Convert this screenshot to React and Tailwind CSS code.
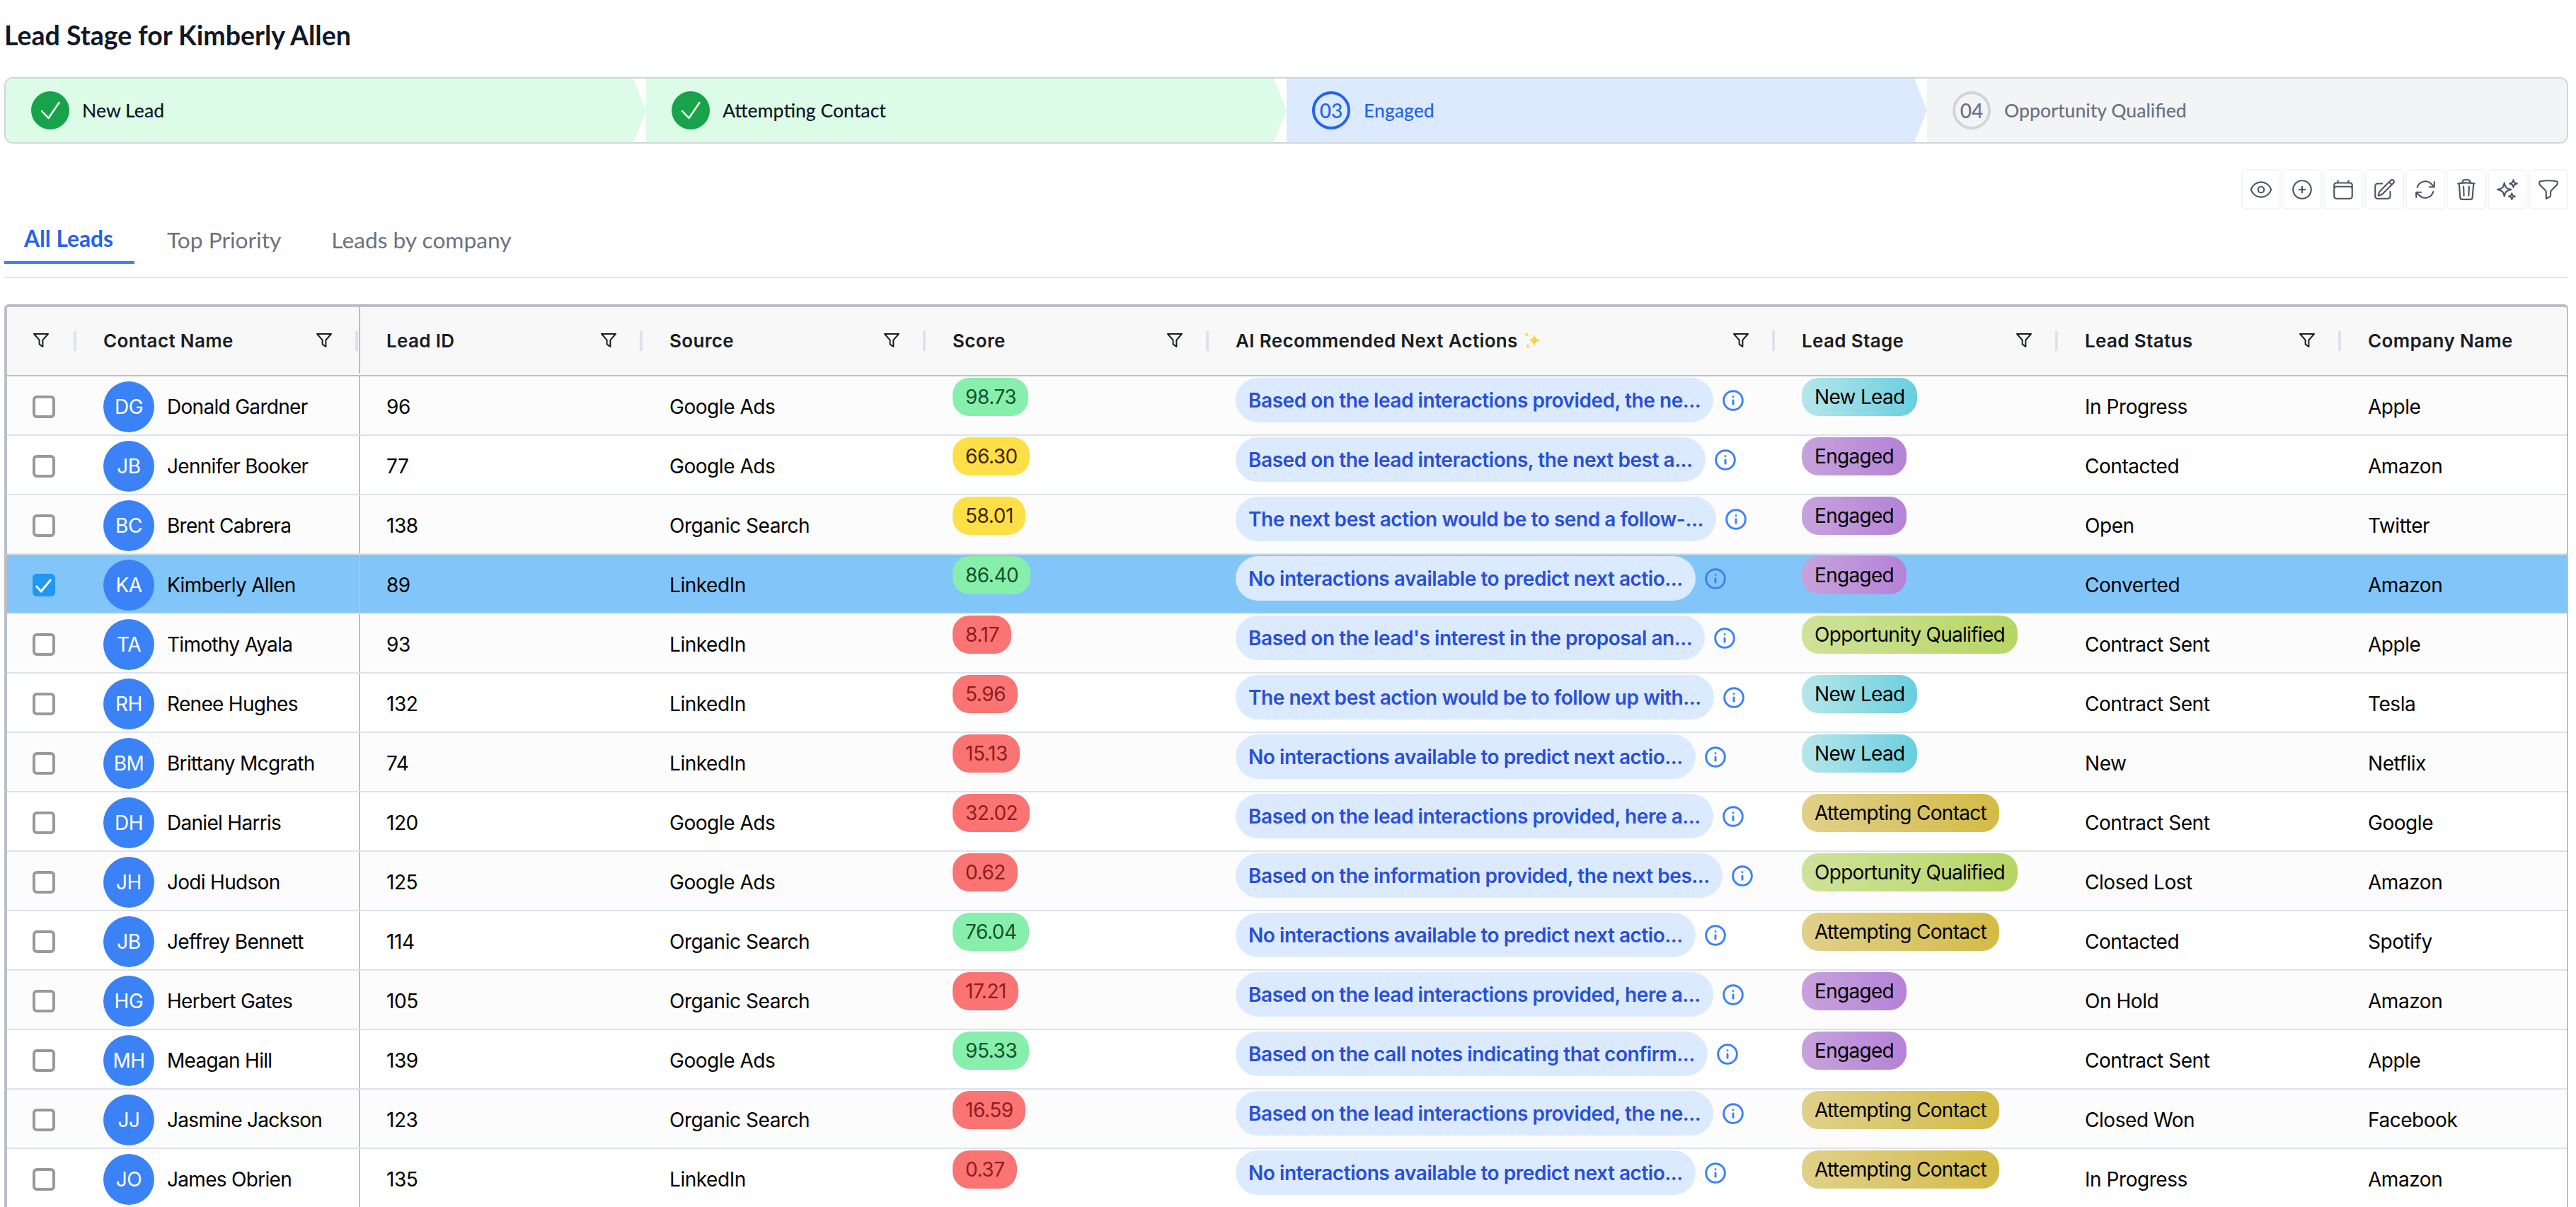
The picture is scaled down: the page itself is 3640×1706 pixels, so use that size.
import { Info } from 'lucide-react';
import {
  HiOutlineEye,
  HiOutlinePlusCircle,
  HiOutlineCalendar,
  HiOutlinePencilSquare,
  HiOutlineArrowPath,
  HiOutlineTrash,
  HiOutlineSparkles,
  HiOutlineFunnel,
} from 'react-icons/hi2';

const NO_INTERACTIONS = 'No interactions available to predict next actio...';

const LEADS = [
  ['DG', 'Donald Gardner', '96', 'Google Ads', '98.73', 'green', 'Based on the lead interactions provided, the ne...', 'New Lead', 'In Progress', 'Apple'],
  ['JB', 'Jennifer Booker', '77', 'Google Ads', '66.30', 'yellow', 'Based on the lead interactions, the next best a...', 'Engaged', 'Contacted', 'Amazon'],
  ['BC', 'Brent Cabrera', '138', 'Organic Search', '58.01', 'yellow', 'The next best action would be to send a follow-...', 'Engaged', 'Open', 'Twitter'],
  ['KA', 'Kimberly Allen', '89', 'LinkedIn', '86.40', 'green', NO_INTERACTIONS, 'Engaged', 'Converted', 'Amazon'],
  ['TA', 'Timothy Ayala', '93', 'LinkedIn', '8.17', 'red', "Based on the lead's interest in the proposal an...", 'Opportunity Qualified', 'Contract Sent', 'Apple'],
  ['RH', 'Renee Hughes', '132', 'LinkedIn', '5.96', 'red', 'The next best action would be to follow up with...', 'New Lead', 'Contract Sent', 'Tesla'],
  ['BM', 'Brittany Mcgrath', '74', 'LinkedIn', '15.13', 'red', NO_INTERACTIONS, 'New Lead', 'New', 'Netflix'],
  ['DH', 'Daniel Harris', '120', 'Google Ads', '32.02', 'red', 'Based on the lead interactions provided, here a...', 'Attempting Contact', 'Contract Sent', 'Google'],
  ['JH', 'Jodi Hudson', '125', 'Google Ads', '0.62', 'red', 'Based on the information provided, the next bes...', 'Opportunity Qualified', 'Closed Lost', 'Amazon'],
  ['JB', 'Jeffrey Bennett', '114', 'Organic Search', '76.04', 'green', NO_INTERACTIONS, 'Attempting Contact', 'Contacted', 'Spotify'],
  ['HG', 'Herbert Gates', '105', 'Organic Search', '17.21', 'red', 'Based on the lead interactions provided, here a...', 'Engaged', 'On Hold', 'Amazon'],
  ['MH', 'Meagan Hill', '139', 'Google Ads', '95.33', 'green', 'Based on the call notes indicating that confirm...', 'Engaged', 'Contract Sent', 'Apple'],
  ['JJ', 'Jasmine Jackson', '123', 'Organic Search', '16.59', 'red', 'Based on the lead interactions provided, the ne...', 'Attempting Contact', 'Closed Won', 'Facebook'],
  ['JO', 'James Obrien', '135', 'LinkedIn', '0.37', 'red', NO_INTERACTIONS, 'Attempting Contact', 'In Progress', 'Amazon'],
];

const SCORE_STYLES = {
  green: 'bg-[#86efac] text-[#14532d]',
  yellow: 'bg-[#fde047] text-[#422006]',
  red: 'bg-[#fa7474] text-[#8f1d1d]',
};

const STAGE_STYLES = {
  'New Lead': 'from-[#b5e6ea] to-[#67cfde]',
  Engaged: 'from-[#c6a3dc] to-[#b582d7]',
  'Opportunity Qualified': 'from-[#cfe29a] to-[#b6d662]',
  'Attempting Contact': 'from-[#e0d08a] to-[#d4bb44]',
};

const COLS = 'grid grid-cols-[99px_400px_400px_400px_400px_800px_400px_400px_400px]';

const TOOLBAR = [
  HiOutlineEye,
  HiOutlinePlusCircle,
  HiOutlineCalendar,
  HiOutlinePencilSquare,
  HiOutlineArrowPath,
  HiOutlineTrash,
  HiOutlineSparkles,
  HiOutlineFunnel,
];

function FilterIcon() {
  return (
    <svg viewBox="0 0 24 22" className="w-[24px] h-[22px] shrink-0" fill="none" stroke="#181d1f" strokeWidth="2" strokeLinejoin="round">
      <path d="M2 2h20l-7.6 8.6V20l-4.8-3.4v-6z" />
    </svg>
  );
}

function SparkleEmoji() {
  return (
    <svg viewBox="0 0 24 24" className="w-[24px] h-[24px] ml-[8px] shrink-0" fill="#fbcf4a">
      <path d="M15 3c.9 5.400 2.400 7.400 9 9-6.600 1.600-8.100 3.600-9 9-.9-5.400-2.400-7.400-8-9 5.600-1.600 7.100-3.600 8-9z" />
      <path d="M4.500 0c.4 2.600 1.100 3.400 3.500 4-2.400.6-3.100 1.400-3.500 4C4.100 5.400 3.400 4.600 1 4c2.400-.6 3.100-1.400 3.500-4z" />
      <path d="M6 17c.3 2.400 1 3.100 3 3.500-2 .4-2.700 1.100-3 3.500-.3-2.400-1-3.100-3-3.500 2-.4 2.700-1.100 3-3.500z" />
    </svg>
  );
}

function StepCheck() {
  return (
    <span className="w-[54px] h-[54px] rounded-full bg-[#16a34a] shrink-0">
      <svg viewBox="0 0 54 54" className="w-[54px] h-[54px]" fill="none" stroke="#ffffff" strokeWidth="2.500" strokeLinecap="round" strokeLinejoin="round">
        <path d="M15 28l9.500 10L39.500 16" />
      </svg>
    </span>
  );
}

function Stepper() {
  return (
    <div className="h-[94px] border-2 border-[#d1d5db] rounded-[12px] overflow-hidden flex font-['Lato',sans-serif] text-[26.6px] font-medium">
      <div className="w-[905px] bg-[#dcfce7] flex items-center pl-[36px] gap-[18px] text-[#111827] [clip-path:polygon(0_0,calc(100%-18px)_0,100%_50%,calc(100%-18px)_100%,0_100%)]">
        <StepCheck />
        <span className="pt-[2px]">New Lead</span>
      </div>
      <div className="w-[905px] bg-[#dcfce7] flex items-center pl-[36px] gap-[18px] text-[#111827] [clip-path:polygon(0_0,calc(100%-18px)_0,100%_50%,calc(100%-18px)_100%,0_100%)]">
        <StepCheck />
        <span className="pt-[2px]">Attempting Contact</span>
      </div>
      <div className="w-[905px] bg-[#dbeafe] flex items-center pl-[36px] gap-[19px] text-[#2563eb] [clip-path:polygon(0_0,calc(100%-18px)_0,100%_50%,calc(100%-18px)_100%,0_100%)]">
        <span className="w-[54px] h-[54px] rounded-full border-[4px] border-[#2563eb] flex items-center justify-center shrink-0 text-[28px]">03</span>
        <span className="pt-[2px]">Engaged</span>
      </div>
      <div className="flex-1 bg-[#f3f4f6] flex items-center pl-[36px] gap-[19px] text-[#6b7280]">
        <span className="w-[54px] h-[54px] rounded-full border-[4px] border-[#d1d5db] flex items-center justify-center shrink-0 text-[28px]">04</span>
        <span className="pt-[2px]">Opportunity Qualified</span>
      </div>
    </div>
  );
}

function HeaderCell({ label, sparkle, pinned }) {
  return (
    <div className={`relative flex items-center justify-between px-[37px] ${pinned ? 'border-r-2 border-[#babfc7]' : ''}`}>
      <span className="flex items-center">
        {label}
        {sparkle && <SparkleEmoji />}
      </span>
      <FilterIcon />
      <span className="absolute right-[1px] top-[34px] w-[4px] h-[28px] bg-[#dde2eb]" />
    </div>
  );
}

function Row({ lead, index }) {
  const [initials, name, id, source, score, tone, action, stage, status, company] = lead;
  const selected = name === 'Kimberly Allen';
  const rowBg = selected ? 'bg-[#82c6f9]' : index % 2 === 0 ? 'bg-[#fcfcfc]' : 'bg-white';
  return (
    <div className={`${COLS} h-[84px] border-b-2 border-[#dde2eb] text-[28px] tracking-[-0.45px] text-black ${rowBg}`}>
      <div className="flex items-center pl-[36px] pt-[4px]">
        {selected ? (
          <span className="w-[32px] h-[32px] rounded-[6px] bg-[#2196f3] flex items-center justify-center">
            <svg viewBox="0 0 32 32" className="w-[32px] h-[32px]" fill="none" stroke="#ffffff" strokeWidth="3" strokeLinejoin="round">
              <path d="M5 17l7 8L26 8" />
            </svg>
          </span>
        ) : (
          <span className="w-[32px] h-[32px] rounded-[6px] border-[4px] border-[#999999] bg-white" />
        )}
      </div>
      <div className="flex items-center gap-[18px] pl-[37px] pt-[4px] border-r-2 border-[#babfc7]">
        <span className="w-[72px] h-[72px] rounded-full bg-[#3b82f6] text-white flex items-center justify-center shrink-0">{initials}</span>
        <span className="tracking-[-0.7px]">{name}</span>
      </div>
      <div className="flex items-center px-[37px] pt-[4px]">{id}</div>
      <div className="flex items-center px-[37px] pt-[4px]">{source}</div>
      <div className="px-[37px] pt-[2px]">
        <span className={`inline-flex items-center h-[54px] pl-[18px] pr-[17px] rounded-[24px] ${SCORE_STYLES[tone]}`}>{score}</span>
      </div>
      <div className="flex items-start gap-[12px] pl-[37px] pt-[2px]">
        <span className="h-[63px] flex items-center px-[18px] rounded-full bg-[#dbeafe] text-[#2a4fd7] font-semibold whitespace-nowrap">{action}</span>
        <Info className="w-[32px] h-[32px] mt-[16px] text-[#3b82f6]" strokeWidth={2.2} />
      </div>
      <div className="px-[37px] pt-[2px]">
        <span className={`inline-flex items-center h-[54px] px-[18px] rounded-[24px] tracking-[-0.7px] bg-gradient-to-r ${STAGE_STYLES[stage]}`}>{stage}</span>
      </div>
      <div className="flex items-center px-[37px] pt-[4px]">{status}</div>
      <div className="flex items-center px-[37px] pt-[4px]">{company}</div>
    </div>
  );
}

export default function App() {
  return (
    <div className="w-[3640px] h-[1706px] overflow-hidden bg-white pl-[6px] pr-[11px] font-['Inter',sans-serif]">
      <h1 className="h-[109px] pt-[26px] text-[37.5px] leading-[48px] font-bold text-[#111827] font-['Lato',sans-serif]">
        Lead Stage for Kimberly Allen
      </h1>
      <Stepper />

      <div className="flex justify-end gap-[2px] mt-[36px] h-[57px]">
        {TOOLBAR.map((Icon, i) => (
          <span key={i} className="w-[56px] h-[57px] border-2 border-[#f3f4f6] rounded-[6px] flex items-center justify-center text-[#4b5563]">
            <Icon className="w-[34px] h-[34px]" />
          </span>
        ))}
      </div>

      <div className="flex items-end h-[77px] font-['Lato',sans-serif] text-[31.7px]">
        <span className="w-[184px] h-[77px] pt-[18px] pl-[28px] border-b-[4px] border-[#3b82f6] text-[#2563eb] font-bold">All Leads</span>
        <span className="h-[77px] pt-[20px] pl-[46px] text-[#6b7280]">Top Priority</span>
        <span className="h-[77px] pt-[20px] pl-[71px] text-[#6b7280]">Leads by company</span>
      </div>
      <div className="h-[2px] mt-[18px] bg-[#e5e7eb]" />

      <div className="mt-[37px] border-t-[4px] border-l-[4px] border-r-[2px] border-[#babfc7] rounded-tl-[6px] rounded-tr-[6px] overflow-hidden">
        <div className={`${COLS} h-[98px] pb-[2px] border-b-2 border-[#babfc7] bg-[#f8f8f8] text-[26px] tracking-[0.35px] font-semibold text-[#181d1f]`}>
          <div className="relative flex items-center pl-[36px]">
            <FilterIcon />
            <span className="absolute right-[1px] top-[34px] w-[4px] h-[28px] bg-[#dde2eb]" />
          </div>
          <HeaderCell label="Contact Name" pinned />
          <HeaderCell label="Lead ID" />
          <HeaderCell label="Source" />
          <HeaderCell label="Score" />
          <HeaderCell label="AI Recommended Next Actions" sparkle />
          <HeaderCell label="Lead Stage" />
          <HeaderCell label="Lead Status" />
          <div className="flex items-center px-[37px]">Company Name</div>
        </div>
        {LEADS.map((lead, i) => (
          <Row key={lead[1]} lead={lead} index={i} />
        ))}
      </div>
    </div>
  );
}
